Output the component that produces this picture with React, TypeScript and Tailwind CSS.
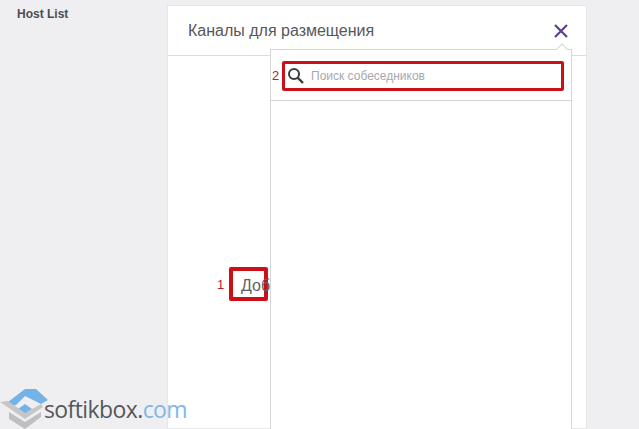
import React from 'react';

function Logo() {
  return (
    <svg width="50" height="41" viewBox="0 0 50 41" className="shrink-0">
      <path d="M8 14 L25 1 L36 1 L48 12 L41 16 L25 8 L16 17 L13 18 Z" fill="#74b3e6" />
      <path d="M18 21 L25 16 L32 21 L25 26 Z" fill="#74b3e6" />
      <path d="M0 14 L8 13 L25 25 L41 16 L43 19 L25 31 Z" fill="#c6c6c8" />
      <path d="M9 24 L25 34 L41 24 L41 29 L25 41 L9 31 Z" fill="#bfbfc1" />
    </svg>
  );
}

export default function App() {
  return (
    <div className="relative h-[429px] w-[639px] overflow-hidden bg-[#efeff1] font-['Liberation_Sans',sans-serif]">
      <div className="flex h-full">
        <div className="w-[167px] shrink-0 pl-[17px] pt-[7px] text-[12px] font-bold leading-[14px] text-[#4d4d52]">
          Host List
        </div>

        {/* modal */}
        <div className="mt-[5px] w-[420px] shrink-0 border border-[#e6e6e9] bg-white">
          <div className="flex h-[50px] items-center justify-between border-b border-[#dcdce0] pl-[20px] pr-[17px]">
            <span className="text-[16px] text-[#56565c]">Каналы для размещения</span>
            <svg width="16" height="16" viewBox="0 0 16 16" className="mt-px">
              <path d="M2 2 L14 14 M14 2 L2 14" stroke="#5c3f96" strokeWidth="2.2" fill="none" />
            </svg>
          </div>
          <div className="flex items-center pl-[49px] pt-[211px]">
            <span className="w-[12px] text-[13px] leading-[15px] text-[#b8202a]">1</span>
            <div className="h-[34px] w-[39px] rounded-[2px] border-4 border-[#cc1018] pl-[8px] pt-[4px] text-[16px] leading-[22px] whitespace-nowrap text-[#5f5f66]">
              Добавить
            </div>
          </div>
        </div>
      </div>

      {/* popover */}
      <div className="absolute left-[270px] top-[49px] h-[400px] w-[302px] border border-[#d6d6da] bg-white">
        <div className="absolute -top-[5px] left-[287px] size-2 rotate-45 border-l border-t border-[#d6d6da] bg-white" />
        <div className="flex h-[51px] items-center border-b border-[#d6d6da] pl-[1px] pr-[7px] pt-[1px]">
          <span className="w-[10px] shrink-0 text-[13px] leading-[15px] text-[#b8202a]">2</span>
          <div className="flex h-[30px] flex-1 items-center rounded-[2px] border-[3px] border-[#cc1018] pl-[3px]">
            <svg width="16" height="16" viewBox="0 0 16 16" className="shrink-0">
              <circle cx="6" cy="6" r="5" stroke="#3b3b40" strokeWidth="2" fill="none" />
              <path d="M9.8 9.8 L15 15" stroke="#3b3b40" strokeWidth="2.4" fill="none" />
            </svg>
            <span className="ml-[7px] text-[12px] text-[#a9a6b0]">Поиск собеседников</span>
          </div>
        </div>
      </div>

      {/* watermark */}
      <div className="absolute bottom-0 left-0 flex items-start">
        <Logo />
        <div className="-ml-[6px] mt-[5px] font-['Open_Sans',sans-serif] text-[23px] font-medium leading-[32px] tracking-[-0.6px]">
          <span className="text-[#57575b]">softikbox.</span>
          <span className="text-[#7db8e6]">com</span>
        </div>
      </div>
    </div>
  );
}
